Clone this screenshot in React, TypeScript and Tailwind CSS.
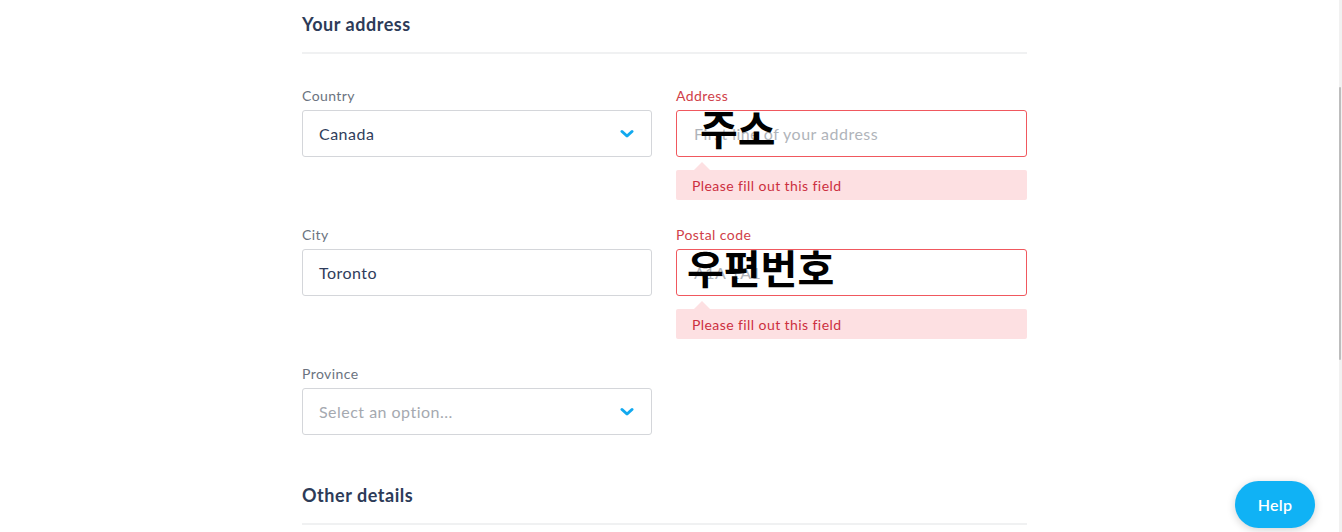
import React from 'react';

const font = { fontFamily: '"Lato", "Open Sans", sans-serif' };

const Chevron = () => (
    <svg width="14" height="10" viewBox="0 0 14 10" className="shrink-0">
        <path d="M2 2.5 L7 7 L12 2.5" fill="none" stroke="#12a9ef" strokeWidth="3" strokeLinecap="round" strokeLinejoin="round" />
    </svg>
);

const Field: React.FC<{ label: string; error?: boolean; children: React.ReactNode }> = ({ label, error, children }) => (
    <div className="flex flex-col">
        <label className={`text-[14px] leading-[18px] mb-[5px] tracking-[0.03em] ${error ? 'text-[#d0414a]' : 'text-[#6b7380]'}`}>{label}</label>
        {children}
    </div>
);

const SelectBox: React.FC<{ value: string; placeholder?: boolean }> = ({ value, placeholder }) => (
    <div className="h-[47px] border border-[#d4d6da] rounded-[3px] flex items-center justify-between pl-[16px] pr-[17px] bg-white">
        <span className={`text-[16px] tracking-[0.03em] ${placeholder ? 'text-[#a5a9b0]' : 'text-[#2f3d5b]'}`}>{value}</span>
        <Chevron />
    </div>
);

const TextBox: React.FC<{ value: string }> = ({ value }) => (
    <div className="h-[47px] border border-[#d4d6da] rounded-[3px] flex items-center pl-[16px] bg-white">
        <span className="text-[16px] tracking-[0.03em] text-[#2f3d5b]">{value}</span>
    </div>
);

const ErrorInput: React.FC<{ placeholder: string; overlay: string; overlayClass: string }> = ({ placeholder, overlay, overlayClass }) => (
    <div className="flex flex-col">
        <div className="relative h-[47px] border border-[#f0585e] rounded-[3px] flex items-center pl-[17px] bg-white">
            <span className="text-[16px] tracking-[0.03em] text-[#b0b4ba]">{placeholder}</span>
            <span
                className={`absolute font-bold text-black leading-none ${overlayClass}`}
                style={{ fontFamily: '"Noto Sans CJK KR", sans-serif' }}
            >
                {overlay}
            </span>
        </div>
        <div className="relative mt-[13px] h-[30px] bg-[#fde0e2] rounded-[2px] flex items-center pl-[16px]">
            <div className="absolute -top-[8px] left-[18px] w-0 h-0 border-l-[8px] border-r-[8px] border-b-[8px] border-l-transparent border-r-transparent border-b-[#fde0e2]" />
            <span className="text-[14px] tracking-[0.03em] text-[#cc2f3f]">Please fill out this field</span>
        </div>
    </div>
);

export default function App() {
    return (
        <div className="w-[1342px] h-[532px] overflow-hidden bg-white flex" style={font}>
            <div className="flex-1 relative">
                <div className="w-[725px] ml-[302px] pt-[12px]">
                    <h2 className="text-[18px] font-bold text-[#2d3b58] leading-[24px] tracking-[0.03em]">Your address</h2>
                    <div className="h-[2px] bg-[#f0f1f2] mt-[16px]" />

                    <div className="grid grid-cols-[350px_351px] gap-x-[24px] gap-y-[26px] mt-[33px]">
                        <Field label="Country">
                            <SelectBox value="Canada" />
                        </Field>
                        <Field label="Address" error>
                            <ErrorInput placeholder="First line of your address" overlay="주소" overlayClass="left-[23px] top-[-4px] text-[41px]" />
                        </Field>

                        <Field label="City">
                            <TextBox value="Toronto" />
                        </Field>
                        <Field label="Postal code" error>
                            <ErrorInput placeholder="A1A 1A1" overlay="우편번호" overlayClass="left-[10px] top-[-3px] text-[40px]" />
                        </Field>

                        <Field label="Province">
                            <SelectBox value="Select an option..." placeholder />
                        </Field>
                        <div />
                    </div>

                    <h2 className="text-[18px] font-bold text-[#2d3b58] leading-[24px] tracking-[0.03em] mt-[48px]">Other details</h2>
                    <div className="h-[2px] bg-[#f0f1f2] mt-[16px]" />
                </div>

                <button className="absolute left-[1235px] top-[481px] w-[80px] h-[47px] rounded-full bg-[#10b2f5] text-white text-[16px] font-semibold tracking-[0.02em] shadow-[0_2px_8px_rgba(0,0,0,0.18)]">
                    Help
                </button>
            </div>
            <div className="w-[3px] bg-[#f1f1f1] flex flex-col pt-[87px]">
                <div className="h-[273px] w-[2px] bg-[#bdbdbd] rounded-full" />
            </div>
        </div>
    );
}
